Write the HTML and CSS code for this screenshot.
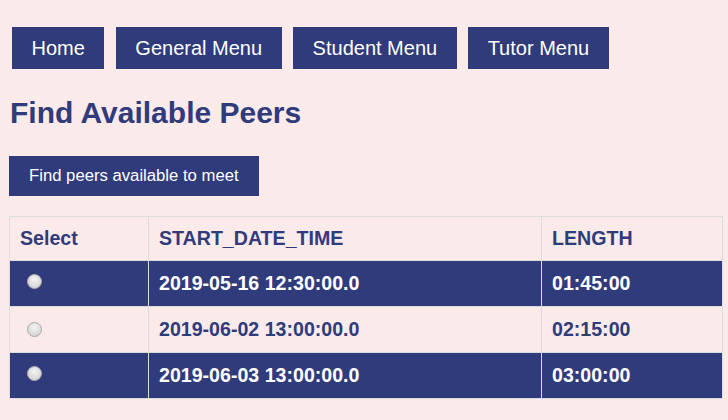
FILE: index.html
```html
<!DOCTYPE html>
<html>
<head>
<meta charset="utf-8">
<link rel="stylesheet" href="styles.css">
</head>
<body>
<nav class="nav">
  <a class="nav-btn" href="#">Home</a>
  <a class="nav-btn" href="#">General Menu</a>
  <a class="nav-btn" href="#">Student Menu</a>
  <a class="nav-btn" href="#">Tutor Menu</a>
</nav>
<h1 class="title">Find Available Peers</h1>
<button class="action-btn">Find peers available to meet</button>
<table class="peers">
  <thead>
    <tr><th class="c-select">Select</th><th class="c-start">START_DATE_TIME</th><th class="c-len">LENGTH</th></tr>
  </thead>
  <tbody>
    <tr class="dark"><td><input type="radio" name="sel" class="radio"></td><td>2019-05-16 12:30:00.0</td><td>01:45:00</td></tr>
    <tr class="light"><td><input type="radio" name="sel" class="radio"></td><td>2019-06-02 13:00:00.0</td><td>02:15:00</td></tr>
    <tr class="dark"><td><input type="radio" name="sel" class="radio"></td><td>2019-06-03 13:00:00.0</td><td>03:00:00</td></tr>
  </tbody>
</table>
</body>
</html>
```

FILE: styles.css
```css
html, body {
  margin: 0;
  padding: 0;
  background: #fbeaea;
  font-family: "Liberation Sans", Arial, sans-serif;
  color: #2f3b7b;
}
body {
  padding: 27px 0 0 9px;
}
.nav {
  display: flex;
  gap: 11.5px;
  padding-left: 3px;
}
.nav-btn {
  display: block;
  height: 42px;
  line-height: 42px;
  padding: 0 19.5px;
  background: #2f3b7b;
  color: #ffffff;
  text-decoration: none;
  font-size: 20px;
}
.title {
  margin: 26px 0 0 1px;
  font-size: 30px;
  font-weight: bold;
  line-height: 36px;
  color: #2f3b7b;
}
.action-btn {
  display: block;
  margin-top: 25px;
  height: 40px;
  padding: 0 20px;
  border: none;
  background: #2f3b7b;
  color: #ffffff;
  font-family: "Liberation Sans", Arial, sans-serif;
  font-size: 16.7px;
}
.peers {
  margin-top: 20px;
  width: 714px;
  border-collapse: collapse;
  font-size: 19.6px;
  font-weight: bold;
}
.peers th, .peers td {
  border: 1px solid #dcdcdc;
  text-align: left;
  padding: 0 10px;
  height: 44px;
  box-sizing: border-box;
}
.c-select { width: 139px; }
.c-start { width: 393px; }
.peers thead tr { height: 44px; }
.peers tr.dark td {
  background: #2f3b7b;
  color: #ffffff;
}
.peers tr.light td {
  background: #fbeaea;
  color: #2f3b7b;
}
.peers tbody tr { height: 46px; }
.radio {
  -webkit-appearance: none;
  appearance: none;
  box-sizing: border-box;
  width: 15px;
  height: 15px;
  margin: 0 0 0 7px;
  border-radius: 50%;
  border: 1px solid #a9a9a9;
  background: radial-gradient(circle at 50% 35%, #f4f4f4 0%, #dedede 55%, #cdcdcd 100%);
  vertical-align: -1px;
  position: relative;
  top: -2px;
}
.peers tr.light .radio { top: 0; }
```
